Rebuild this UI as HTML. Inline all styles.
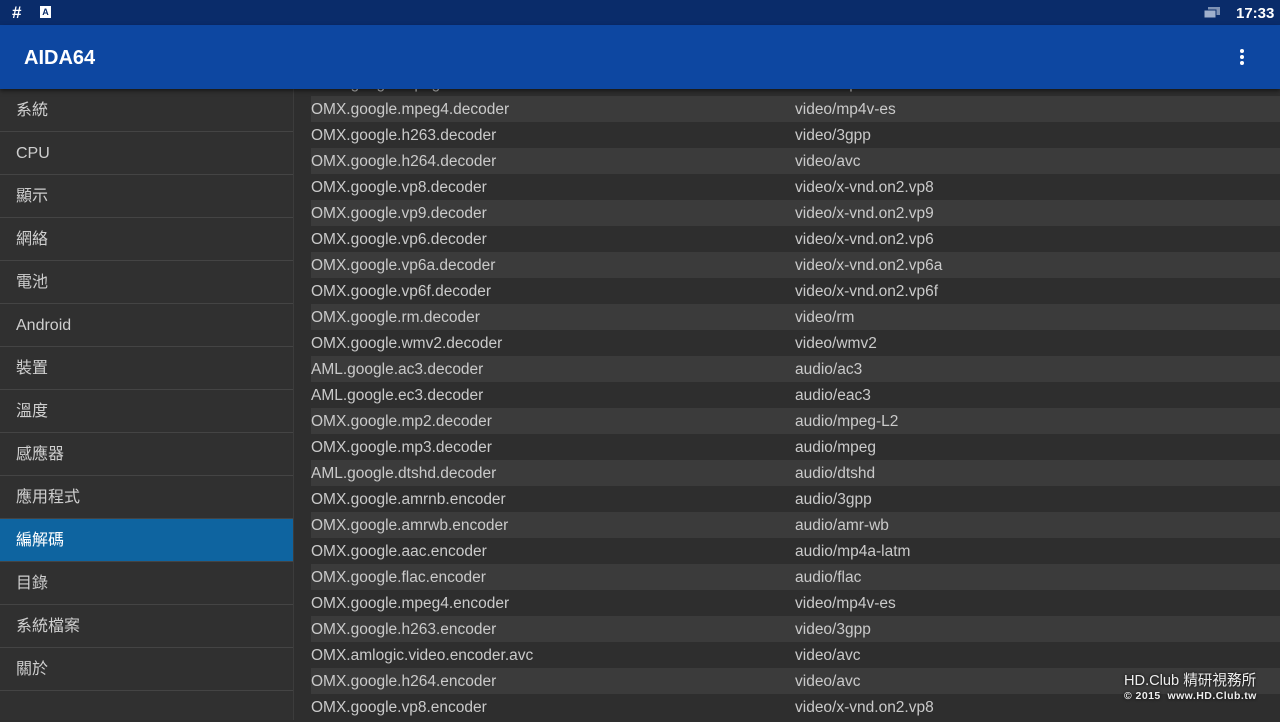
<!DOCTYPE html>
<html><head><meta charset="utf-8"><style>
*{margin:0;padding:0;box-sizing:border-box}
body{width:1280px;height:720px;overflow:hidden;background:#2e2e2e;font-family:"Liberation Sans","Noto Sans CJK TC",sans-serif;position:relative}
.sb{position:absolute;top:0;left:0;width:1280px;height:25px;background:#0a2c6a;color:#fff}
.ab{position:absolute;top:25px;left:0;width:1280px;height:64px;background:#0d47a1;color:#fff;z-index:3;box-shadow:0 2px 4px rgba(0,0,0,.5)}
.ab .t{position:absolute;left:24px;top:22px;font-size:20px;font-weight:bold}
.side{position:absolute;top:89px;left:0;width:294px;height:631px;background:#303030;border-right:1px solid #3c3c3c}
.side div{height:43px;line-height:44px;padding-left:16px;font-size:16px;color:#cfcfcf;border-bottom:1px solid #444}
.side div.sel{background:#0e64a0;color:#fff}
.list{position:absolute;top:70px;left:311px;width:969px}
.list div{height:26px;line-height:28px;font-size:15.5px;color:#cacaca;position:relative}
.list div:nth-child(even){background:#3b3b3b}
.list span{position:absolute;left:484px}
.wm{position:absolute;left:1124px;top:674px;color:#eee;text-shadow:0 0 3px #000;line-height:1}
</style></head><body>
<div class="sb">
<div style="position:absolute;left:12px;top:3px;font-size:17px;font-weight:bold">#</div>
<div style="position:absolute;left:40px;top:6px;width:11px;height:12px;background:#fff;color:#0a2c6a;font-size:9px;font-weight:bold;text-align:center;line-height:12px">A</div>
<svg style="position:absolute;left:1203px;top:6px" width="18" height="14"><rect x="5" y="1" width="12" height="8" fill="#7f93b5"/><rect x="1" y="4" width="12" height="8" fill="#9fb0cc" stroke="#0a2c6a"/></svg>
<div style="position:absolute;left:1236px;top:5px;font-size:15px;font-weight:bold">17:33</div>
</div>
<div class="ab"><div class="t">AIDA64</div>
<svg style="position:absolute;left:1238px;top:23px" width="8" height="18"><circle cx="4" cy="3" r="2" fill="#fff"/><circle cx="4" cy="9" r="2" fill="#fff"/><circle cx="4" cy="15" r="2" fill="#fff"/></svg>
</div>
<div class="side">
<div>系統</div><div>CPU</div><div>顯示</div><div>網絡</div><div>電池</div><div>Android</div><div>裝置</div><div>溫度</div><div>感應器</div><div>應用程式</div><div class="sel">編解碼</div><div>目錄</div><div>系統檔案</div><div>關於</div>
</div>
<div class="list">
<div>OMX.google.mpeg4.decoder<span>video/mp4v-es</span></div>
<div>OMX.google.mpeg4.decoder<span>video/mp4v-es</span></div>
<div>OMX.google.h263.decoder<span>video/3gpp</span></div>
<div>OMX.google.h264.decoder<span>video/avc</span></div>
<div>OMX.google.vp8.decoder<span>video/x-vnd.on2.vp8</span></div>
<div>OMX.google.vp9.decoder<span>video/x-vnd.on2.vp9</span></div>
<div>OMX.google.vp6.decoder<span>video/x-vnd.on2.vp6</span></div>
<div>OMX.google.vp6a.decoder<span>video/x-vnd.on2.vp6a</span></div>
<div>OMX.google.vp6f.decoder<span>video/x-vnd.on2.vp6f</span></div>
<div>OMX.google.rm.decoder<span>video/rm</span></div>
<div>OMX.google.wmv2.decoder<span>video/wmv2</span></div>
<div>AML.google.ac3.decoder<span>audio/ac3</span></div>
<div>AML.google.ec3.decoder<span>audio/eac3</span></div>
<div>OMX.google.mp2.decoder<span>audio/mpeg-L2</span></div>
<div>OMX.google.mp3.decoder<span>audio/mpeg</span></div>
<div>AML.google.dtshd.decoder<span>audio/dtshd</span></div>
<div>OMX.google.amrnb.encoder<span>audio/3gpp</span></div>
<div>OMX.google.amrwb.encoder<span>audio/amr-wb</span></div>
<div>OMX.google.aac.encoder<span>audio/mp4a-latm</span></div>
<div>OMX.google.flac.encoder<span>audio/flac</span></div>
<div>OMX.google.mpeg4.encoder<span>video/mp4v-es</span></div>
<div>OMX.google.h263.encoder<span>video/3gpp</span></div>
<div>OMX.amlogic.video.encoder.avc<span>video/avc</span></div>
<div>OMX.google.h264.encoder<span>video/avc</span></div>
<div>OMX.google.vp8.encoder<span>video/x-vnd.on2.vp8</span></div>
</div>
<div class="wm"><div style="font-size:14.6px">HD.Club 精研視務所</div><div style="font-size:10.5px;font-weight:bold;margin-top:2px;letter-spacing:0.45px">© 2015 &nbsp;www.HD.Club.tw</div></div>
</body></html>
